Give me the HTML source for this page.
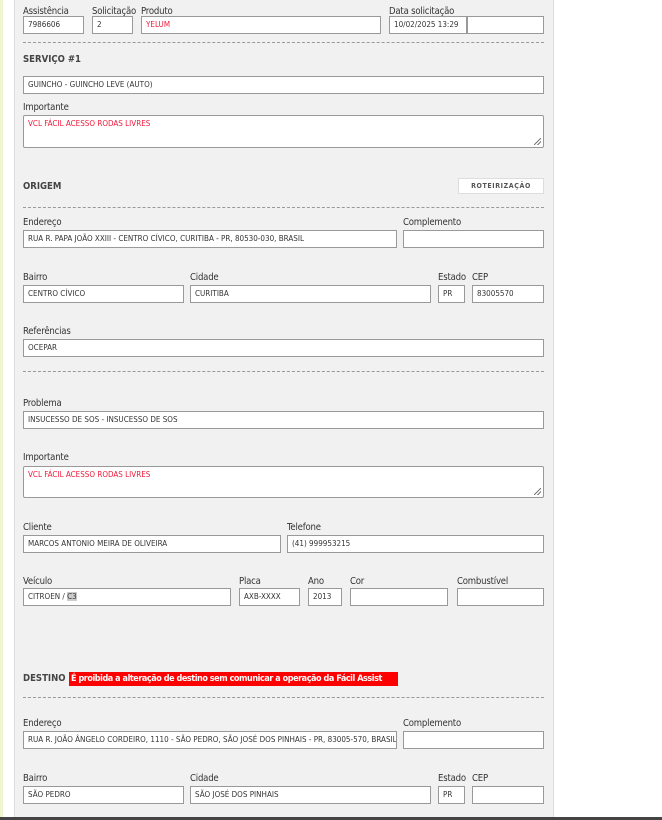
<!DOCTYPE html>
<html><head><meta charset="utf-8"><style>
*{margin:0;padding:0;box-sizing:border-box}
body{width:662px;height:820px;overflow:hidden;background:#fff;font-family:"DejaVu Sans Condensed","Liberation Sans",sans-serif;color:#333;position:relative}
#strip{position:absolute;left:0;top:0;width:3px;height:820px;background:#eef5cf}
#panel{position:absolute;left:14px;top:0;width:540px;height:817px;background:#f1f1f1;border-left:1px solid #ddd;border-right:1px solid #ddd}
#bar{position:absolute;left:0;top:817px;width:662px;height:3px;background:#444}
.l{position:absolute;font-size:9.5px;color:#333;white-space:nowrap;letter-spacing:-0.2px;margin-top:2px}
.i{position:absolute;height:18px;background:#fff;border:1px solid #999;font-size:8px;line-height:16px;padding-left:4px;white-space:nowrap;overflow:hidden;color:#333}
.r{color:#f0183a}
.t{position:absolute;background:#fff;border:1px solid #999;border-radius:2px;font-size:8px;padding:3px 4px;color:#f0183a}
.d{position:absolute;left:23px;width:521px;border-top:1px dashed #999}
.h{position:absolute;font-size:9.5px;font-weight:bold;color:#444;margin-top:1px}
.g{position:absolute;right:2px;bottom:2px;width:7px;height:7px;background:linear-gradient(135deg,transparent 45%,#777 45%,#777 55%,transparent 55%,transparent 70%,#777 70%,#777 80%,transparent 80%)}
</style></head><body>
<div id="strip"></div><div id="panel"></div><div id="bar"></div>

<div class="l" style="left:23px;top:4px">Assistência</div>
<div class="l" style="left:92px;top:4px">Solicitação</div>
<div class="l" style="left:141px;top:4px">Produto</div>
<div class="l" style="left:389px;top:4px">Data solicitação</div>
<div class="i" style="left:23px;top:16px;width:61px">7986606</div>
<div class="i" style="left:92px;top:16px;width:41px">2</div>
<div class="i r" style="left:141px;top:16px;width:240px">YELUM</div>
<div class="i" style="left:389px;top:16px;width:78px">10/02/2025 13:29</div>
<div class="i" style="left:467px;top:16px;width:77px"></div>
<div class="d" style="top:42px"></div>

<div class="h" style="left:23px;top:53px">SERVIÇO #1</div>
<div class="i" style="left:23px;top:76px;width:521px">GUINCHO - GUINCHO LEVE (AUTO)</div>
<div class="l" style="left:23px;top:100px">Importante</div>
<div class="t" style="left:23px;top:115px;width:521px;height:33px">VCL FÁCIL ACESSO RODAS LIVRES<div class="g"></div></div>

<div class="h" style="left:23px;top:180px">ORIGEM</div>
<div style="position:absolute;left:458px;top:178px;width:86px;height:16px;background:#fff;border:1px solid #ddd;font-size:7px;font-weight:bold;letter-spacing:0.6px;text-align:center;line-height:14px;color:#555">ROTEIRIZAÇÃO</div>
<div class="d" style="top:207px"></div>

<div class="l" style="left:23px;top:215px">Endereço</div>
<div class="l" style="left:403px;top:215px">Complemento</div>
<div class="i" style="left:23px;top:230px;width:374px">RUA R. PAPA JOÃO XXIII - CENTRO CÍVICO, CURITIBA - PR, 80530-030, BRASIL</div>
<div class="i" style="left:403px;top:230px;width:141px"></div>

<div class="l" style="left:23px;top:270px">Bairro</div>
<div class="l" style="left:190px;top:270px">Cidade</div>
<div class="l" style="left:438px;top:270px">Estado</div>
<div class="l" style="left:472px;top:270px">CEP</div>
<div class="i" style="left:23px;top:285px;width:161px">CENTRO CÍVICO</div>
<div class="i" style="left:190px;top:285px;width:241px">CURITIBA</div>
<div class="i" style="left:438px;top:285px;width:27px">PR</div>
<div class="i" style="left:472px;top:285px;width:72px">83005570</div>

<div class="l" style="left:23px;top:324px">Referências</div>
<div class="i" style="left:23px;top:339px;width:521px">OCEPAR</div>
<div class="d" style="top:371px"></div>

<div class="l" style="left:23px;top:396px">Problema</div>
<div class="i" style="left:23px;top:411px;width:521px">INSUCESSO DE SOS - INSUCESSO DE SOS</div>
<div class="l" style="left:23px;top:450px">Importante</div>
<div class="t" style="left:23px;top:466px;width:521px;height:32px">VCL FÁCIL ACESSO RODAS LIVRES<div class="g"></div></div>

<div class="l" style="left:23px;top:520px">Cliente</div>
<div class="l" style="left:287px;top:520px">Telefone</div>
<div class="i" style="left:23px;top:535px;width:258px">MARCOS ANTONIO MEIRA DE OLIVEIRA</div>
<div class="i" style="left:287px;top:535px;width:257px">(41) 999953215</div>

<div class="l" style="left:23px;top:574px">Veículo</div>
<div class="l" style="left:239px;top:574px">Placa</div>
<div class="l" style="left:308px;top:574px">Ano</div>
<div class="l" style="left:350px;top:574px">Cor</div>
<div class="l" style="left:457px;top:574px">Combustível</div>
<div class="i" style="left:23px;top:588px;width:208px">CITROEN / <span style="background:#ccc">C3</span></div>
<div class="i" style="left:239px;top:588px;width:61px">AXB-XXXX</div>
<div class="i" style="left:308px;top:588px;width:34px">2013</div>
<div class="i" style="left:350px;top:588px;width:98px"></div>
<div class="i" style="left:457px;top:588px;width:87px"></div>

<div class="h" style="left:23px;top:672px">DESTINO</div>
<div style="position:absolute;left:69px;top:672px;width:329px;height:14px;background:#f00;color:#fff;font-size:9px;font-weight:bold;line-height:14px;padding-left:2px;white-space:nowrap;letter-spacing:-0.45px;overflow:hidden">É proibida a alteração de destino sem comunicar a operação da Fácil Assist</div>
<div class="d" style="top:697px"></div>

<div class="l" style="left:23px;top:716px">Endereço</div>
<div class="l" style="left:403px;top:716px">Complemento</div>
<div class="i" style="left:23px;top:731px;width:374px">RUA R. JOÃO ÂNGELO CORDEIRO, 1110 - SÃO PEDRO, SÃO JOSÉ DOS PINHAIS - PR, 83005-570, BRASIL</div>
<div class="i" style="left:403px;top:731px;width:141px"></div>

<div class="l" style="left:23px;top:771px">Bairro</div>
<div class="l" style="left:190px;top:771px">Cidade</div>
<div class="l" style="left:438px;top:771px">Estado</div>
<div class="l" style="left:472px;top:771px">CEP</div>
<div class="i" style="left:23px;top:786px;width:161px">SÃO PEDRO</div>
<div class="i" style="left:190px;top:786px;width:241px">SÃO JOSÉ DOS PINHAIS</div>
<div class="i" style="left:438px;top:786px;width:27px">PR</div>
<div class="i" style="left:472px;top:786px;width:72px"></div>
</body></html>
